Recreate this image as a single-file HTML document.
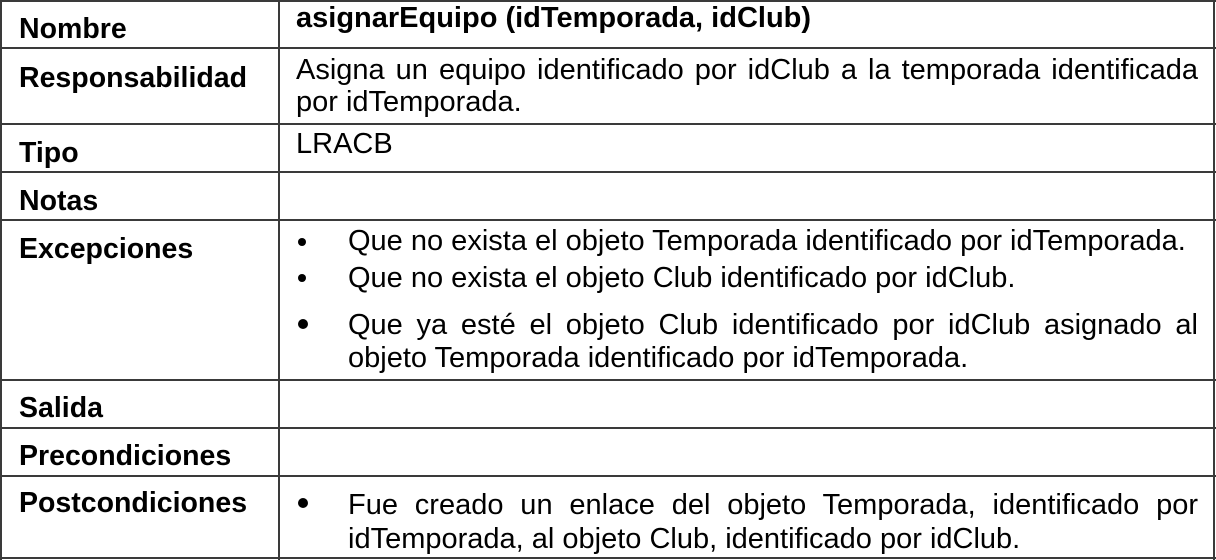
<!DOCTYPE html><html><head><meta charset="utf-8"><style>
body{margin:0;width:1216px;height:560px;background:#fff;position:relative;overflow:hidden;font-family:"Liberation Sans",Arial,sans-serif;color:#000}
.h{position:absolute;left:0;width:1216px;height:2px;background:#3a3a3a}
.v{position:absolute;top:0;height:560px;width:2px;background:#3a3a3a}
.t{position:absolute;font-size:29px;line-height:29px;white-space:nowrap}
.b{font-weight:bold;font-size:28.5px;line-height:28.5px;left:19px}
.j{text-align:justify;text-align-last:justify;white-space:normal}
.d{position:absolute;width:9px;height:9px;border-radius:50%;background:#000;left:298px}
</style></head><body>
<div class="h" style="top:0"></div><div class="h" style="top:47px"></div><div class="h" style="top:123px"></div><div class="h" style="top:171px"></div><div class="h" style="top:219px"></div><div class="h" style="top:379px"></div><div class="h" style="top:427px"></div><div class="h" style="top:475px"></div><div class="h" style="top:557px"></div>
<div class="v" style="left:0"></div><div class="v" style="left:278px"></div><div class="v" style="left:1213px"></div>
<div class="t b" style="top:15px">Nombre</div>
<div class="t b" style="top:64px">Responsabilidad</div>
<div class="t b" style="top:139px">Tipo</div>
<div class="t b" style="top:187px">Notas</div>
<div class="t b" style="top:235px">Excepciones</div>
<div class="t b" style="top:394px">Salida</div>
<div class="t b" style="top:442px">Precondiciones</div>
<div class="t b" style="top:489px">Postcondiciones</div>
<div class="t" style="top:4px;left:296px;font-weight:bold">asignarEquipo (idTemporada, idClub)</div>
<div class="t j" style="top:56px;left:296px;width:902px">Asigna un equipo identificado por idClub a la temporada identificada</div>
<div class="t" style="top:88px;left:296px">por idTemporada.</div>
<div class="t" style="top:130px;left:296px">LRACB</div>
<div class="d" style="top:238px;width:8px;height:8px"></div><div class="t" style="top:227px;left:348px">Que no exista el objeto Temporada identificado por idTemporada.</div>
<div class="d" style="top:274px;width:8px;height:8px"></div><div class="t" style="top:264px;left:348px">Que no exista el objeto Club identificado por idClub.</div>
<div class="d" style="top:319px;width:10px;height:10px"></div><div class="t j" style="top:311px;left:348px;width:850px">Que ya esté el objeto Club identificado por idClub asignado al</div>
<div class="t" style="top:344px;left:348px">objeto Temporada identificado por idTemporada.</div>
<div class="d" style="top:498px;width:10px;height:10px"></div><div class="t j" style="top:491px;left:348px;width:850px">Fue creado un enlace del objeto Temporada, identificado por</div>
<div class="t" style="top:525px;left:348px">idTemporada, al objeto Club, identificado por idClub.</div>
</body></html>
